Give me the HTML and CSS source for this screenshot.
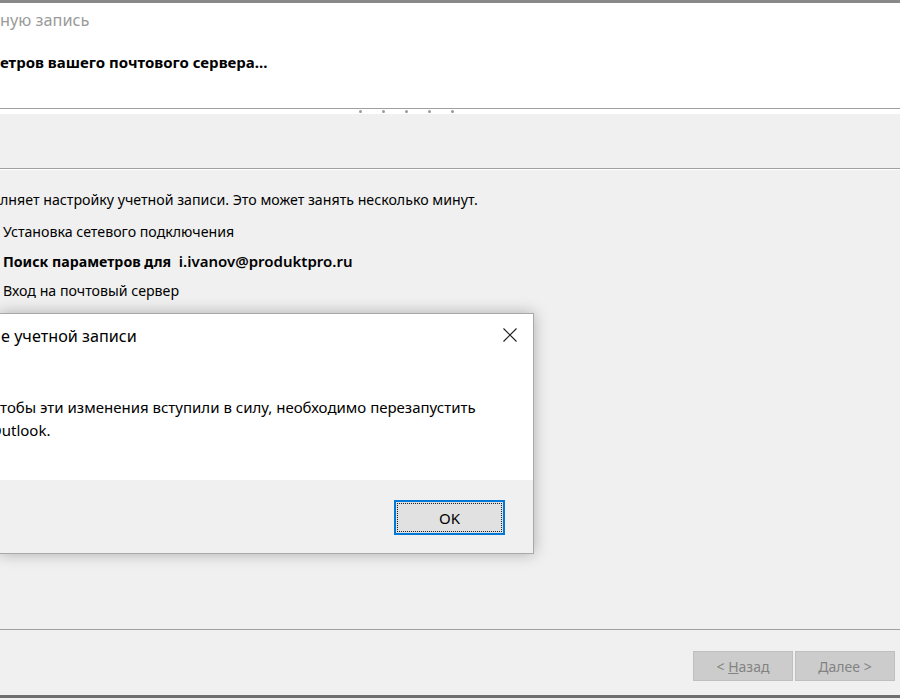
FILE: index.html
```html
<!DOCTYPE html>
<html>
<head>
    <title>Добавить учетную запись</title>
    <link rel="stylesheet" href="styles.css">
</head>
<body>
    <div class="window">
        <div class="topbar"></div>

        <header class="header">
            <div class="header-title">ную запись</div>
            <div class="header-sub">етров вашего почтового сервера...</div>
        </header>

        <div class="progress">
            <span class="dot"></span>
            <span class="dot"></span>
            <span class="dot"></span>
            <span class="dot"></span>
            <span class="dot"></span>
        </div>

        <div class="band"></div>

        <main class="content">
            <p class="intro">лняет настройку учетной записи. Это может занять несколько минут.</p>
            <ul class="steps">
                <li>Установка сетевого подключения</li>
                <li class="current"><b>Поиск параметров для</b> <span class="email">i.ivanov@produktpro.ru</span></li>
                <li>Вход на почтовый сервер</li>
            </ul>
        </main>

        <footer class="footer">
            <button class="btn" disabled>&lt; <u>Н</u>азад</button>
            <button class="btn" disabled><u>Д</u>алее &gt;</button>
        </footer>

        <div class="bottombar"></div>
    </div>

    <div class="dialog">
        <div class="dlg-head">
            <span class="dlg-title">е учетной записи</span>
            <svg class="dlg-close" width="14" height="14" viewBox="0 0 14 14">
                <path d="M0.5 0.5 L13.5 13.5 M13.5 0.5 L0.5 13.5" stroke="#1a1a1a" stroke-width="1.1" fill="none"/>
            </svg>
        </div>
        <div class="dlg-body">
            <p class="dlg-text">Чтобы эти изменения вступили в силу, необходимо перезапустить<br>Outlook.</p>
        </div>
        <div class="dlg-foot">
            <button class="ok">OK</button>
        </div>
    </div>
</body>
</html>
```

FILE: styles.css
```css
html, body {
    margin: 0;
    padding: 0;
    overflow: hidden;
}
body {
    font-family: "Segoe UI", "Noto Sans", sans-serif;
    background-color: #f0f0f0;
    color: #000;
    width: 900px;
    height: 700px;
    position: relative;
}
.window {
    display: flex;
    flex-direction: column;
    height: 700px;
}
.topbar {
    height: 3px;
    background-color: #898989;
}
.header {
    height: 105px;
    box-sizing: border-box;
    background-color: white;
    padding-top: 5px;
}
.header-title {
    font-size: 16.3px;
    line-height: 24px;
    color: #9a9a9a;
}
.header-sub {
    margin-top: 20px;
    font-size: 15px;
    line-height: 20px;
    font-weight: bold;
    color: #000;
}
.progress {
    height: 5px;
    border-top: 1px solid #a0a0a0;
    background-color: white;
    display: flex;
    align-items: center;
    gap: 20px;
    padding-left: 359px;
}
.dot {
    width: 3px;
    height: 3px;
    border-radius: 50%;
    background-color: #9a9a9a;
}
.band {
    height: 54px;
    border-bottom: 1px solid #a0a0a0;
    box-shadow: 0 1px 0 white;
}
.content {
    height: 460px;
    box-sizing: border-box;
    padding-top: 21px;
    font-size: 14.2px;
}
.intro {
    margin: 0 0 12px;
    line-height: 20px;
}
.steps {
    list-style: none;
    margin: 0;
    padding: 0 0 0 3px;
    display: flex;
    flex-direction: column;
    gap: 9px;
}
.steps li {
    line-height: 20px;
}
.current b {
    margin-right: 4px;
}
.email {
    font-size: 15px;
    font-weight: 600;
}
.footer {
    height: 66px;
    box-sizing: border-box;
    border-top: 1px solid #a0a0a0;
    display: flex;
    justify-content: flex-end;
    gap: 2px;
    padding: 21px 5px 0 0;
}
.btn {
    width: 100px;
    height: 30px;
    background-color: #cccccc;
    border: 1px solid #bfbfbf;
    color: #838383;
    font-family: inherit;
    font-size: 14px;
    padding: 0;
}
.bottombar {
    height: 3px;
    background-color: #6e6e6e;
}

/* modal */
.dialog {
    position: absolute;
    left: -1px;
    top: 313px;
    width: 535px;
    height: 241px;
    box-sizing: border-box;
    background-color: white;
    border: 1px solid #a8a8a8;
    box-shadow: 0 0 14px rgba(0,0,0,0.28);
    display: flex;
    flex-direction: column;
}
.dlg-head {
    height: 46px;
    display: flex;
    justify-content: space-between;
    align-items: flex-start;
    padding: 12px 16px 0 1px;
    box-sizing: border-box;
}
.dlg-title {
    font-size: 16.2px;
    line-height: 20px;
}
.dlg-close {
    margin-top: 2px;
}
.dlg-body {
    height: 120px;
    box-sizing: border-box;
    padding-top: 36px;
}
.dlg-text {
    margin: 0 0 0 -10px;
    font-size: 15px;
    line-height: 23px;
}
.dlg-foot {
    flex: 1;
    background-color: #f0f0f0;
    display: flex;
    justify-content: flex-end;
    align-items: flex-start;
    padding: 20px 28px 0 0;
}
.ok {
    width: 111px;
    height: 35px;
    background-color: #e1e1e1;
    border: 2px solid #0078d7;
    outline: 1px dotted #222;
    outline-offset: -4px;
    font-family: inherit;
    font-size: 15px;
    color: #000;
    padding: 0;
}
```
